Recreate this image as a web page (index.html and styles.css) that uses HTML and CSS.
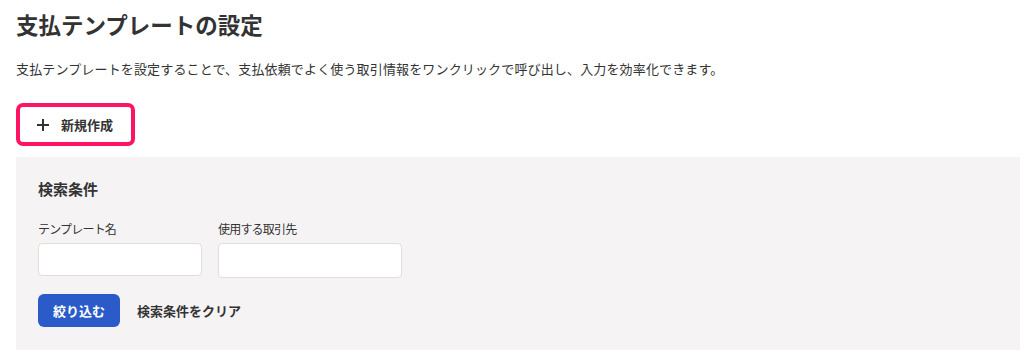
FILE: index.html
```html
<!DOCTYPE html>
<html lang="ja">
<head>
    <meta charset="UTF-8">
    <meta name="viewport" content="width=device-width, initial-scale=1.0">
    <title>支払テンプレートの設定</title>
    <link rel="stylesheet" href="styles.css">
</head>
<body>
    <div class="page">
        <h1 class="page-title">支払テンプレートの設定</h1>
        <p class="page-lead">支払テンプレートを設定することで、支払依頼でよく使う取引情報をワンクリックで呼び出し、入力を効率化できます。</p>

        <button class="new-button" type="button">
            <svg class="plus-icon" width="14" height="14" viewBox="0 0 14 14" aria-hidden="true">
                <path d="M7 1v12M1 7h12" stroke="#333" stroke-width="2" fill="none"/>
            </svg>
            <span>新規作成</span>
        </button>

        <div class="search-panel">
            <h2 class="search-title">検索条件</h2>
            <div class="search-fields">
                <div class="field">
                    <label class="field-label" for="template-name">テンプレート名</label>
                    <input class="field-input field-input--name" type="text" id="template-name">
                </div>
                <div class="field">
                    <label class="field-label" for="partner">使用する取引先</label>
                    <input class="field-input field-input--partner" type="text" id="partner">
                </div>
            </div>
            <div class="search-actions">
                <button class="filter-button" type="button">絞り込む</button>
                <button class="clear-button" type="button">検索条件をクリア</button>
            </div>
        </div>
    </div>
</body>
</html>
```

FILE: styles.css
```css
body {
    margin: 0;
    font-family: "Noto Sans CJK JP", "Noto Sans", sans-serif;
    color: #333;
    background-color: #fff;
}
.page {
    padding: 0 16px;
}
.page-title {
    margin: 0;
    padding-top: 8px;
    font-size: 22.5px;
    line-height: 33px;
    font-weight: bold;
    color: #333;
}
.page-lead {
    margin: 18px 0 0;
    font-size: 13px;
    line-height: 20px;
    letter-spacing: 0.15px;
}
.new-button {
    display: flex;
    align-items: center;
    gap: 11px;
    margin-top: 24px;
    height: 43px;
    padding: 0 18px 0 16px;
    border: 4px solid #ff1464;
    border-radius: 7px;
    background-color: #fff;
    font-family: inherit;
    font-size: 13px;
    font-weight: bold;
    color: #333;
    cursor: pointer;
}
.plus-icon {
    display: block;
}
.search-panel {
    margin-top: 11px;
    height: 193px;
    box-sizing: border-box;
    padding: 21px 22px 0;
    background-color: #f5f3f3;
}
.search-title {
    margin: 0;
    font-size: 15px;
    line-height: 22px;
    font-weight: bold;
}
.search-fields {
    display: flex;
    gap: 16px;
    margin-top: 20px;
}
.field-label {
    display: block;
    font-size: 12px;
    line-height: 18px;
    letter-spacing: -0.8px;
}
.field-input {
    display: block;
    box-sizing: border-box;
    margin-top: 5px;
    border: 1px solid #e3ded6;
    border-radius: 4px;
    background-color: #fff;
}
.field-input--name {
    width: 164px;
    height: 33px;
}
.field-input--partner {
    width: 184px;
    height: 35px;
}
.search-actions {
    display: flex;
    align-items: center;
    gap: 17px;
    margin-top: 16px;
}
.filter-button {
    width: 82px;
    height: 33px;
    border: none;
    border-radius: 6px;
    background-color: #2a5bc9;
    color: #fff;
    font-family: inherit;
    font-size: 13px;
    font-weight: bold;
    cursor: pointer;
}
.clear-button {
    padding: 0;
    border: none;
    background: none;
    color: #333;
    font-family: inherit;
    font-size: 13px;
    font-weight: bold;
    cursor: pointer;
}
```
